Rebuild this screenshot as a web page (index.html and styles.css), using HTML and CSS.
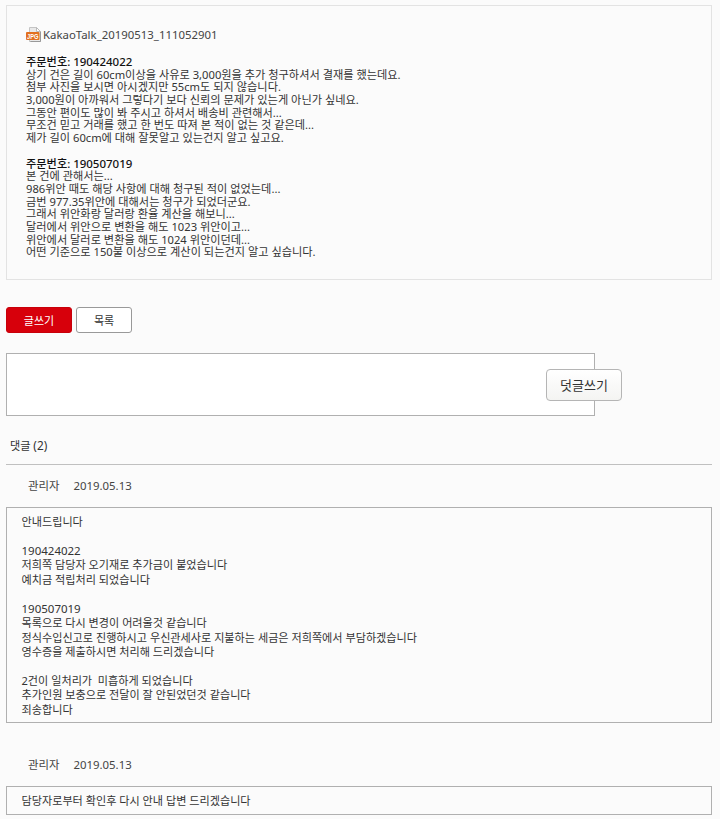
FILE: index.html
```html
<!DOCTYPE html>
<html lang="ko">
<head>
  <meta charset="UTF-8" />
  <title>문의 게시판</title>
  <link rel="stylesheet" href="styles.css">
</head>
<body>
  <div class="view">
    <div class="file">
      <svg class="file-icon" width="16" height="16" viewBox="0 0 16 16">
        <path d="M3.5 .5h7l4 4v10h-11z" fill="#e9e9e9" stroke="#c4c4c4"/>
        <path d="M14.5 4.5v10h-10" fill="none" stroke="#999"/>
        <path d="M10.5 .5v4h4z" fill="#fff" stroke="#bbb"/>
        <rect x="0" y="5" width="13.5" height="8" rx="1" fill="#e2701f"/>
        <text class="file-ext" x="1" y="11.7" textLength="11.5" lengthAdjust="spacingAndGlyphs">JPG</text>
      </svg>
      <a class="file-name">KakaoTalk_20190513_111052901</a>
    </div>
    <div class="content">
      <p class="order">주문번호: <span>190424022</span></p>
      <p>상기 건은 길이 60cm이상을 사유로 3,000원을 추가 청구하셔서 결재를 했는데요.</p>
      <p>첨부 사진을 보시면 아시겠지만 55cm도 되지 않습니다.</p>
      <p>3,000원이 아까워서 그렇다기 보다 신뢰의 문제가 있는게 아닌가 싶네요.</p>
      <p>그동안 편이도 많이 봐 주시고 하셔서 배송비 관련해서...</p>
      <p>무조건 믿고 거래를 했고 한 번도 따져 본 적이 없는 것 같은데...</p>
      <p>제가 길이 60cm에 대해 잘못알고 있는건지 알고 싶고요.</p>
      <br>
      <p class="order">주문번호: <span>190507019</span></p>
      <p>본 건에 관해서는...</p>
      <p>986위안 때도 해당 사항에 대해 청구된 적이 없었는데...</p>
      <p>금번 977.35위안에 대해서는 청구가 되었더군요.</p>
      <p>그래서 위안화랑 달러랑 환율 계산을 해보니...</p>
      <p>달러에서 위안으로 변환을 해도 1023 위안이고...</p>
      <p>위안에서 달러로 변환을 해도 1024 위안이던데...</p>
      <p>어떤 기준으로 150불 이상으로 계산이 되는건지 알고 싶습니다.</p>
    </div>
  </div>

  <div class="buttons">
    <button class="btn btn-write">글쓰기</button>
    <button class="btn btn-list">목록</button>
  </div>

  <div class="reply-form">
    <textarea class="reply-text"></textarea>
    <button class="btn-reply">덧글쓰기</button>
  </div>

  <div class="reply-count">댓글 <span>(2)</span></div>

  <div class="reply">
    <div class="reply-info"><span>관리자</span><span>2019.05.13</span></div>
    <div class="reply-body">안내드립니다

<span class="num">190424022</span>
저희쪽 담당자 오기재로 추가금이 붙었습니다
예치금 적립처리 되었습니다

<span class="num">190507019</span>
목록으로 다시 변경이 어려울것 같습니다
정식수입신고로 진행하시고 우신관세사로 지불하는 세금은 저희쪽에서 부담하겠습니다
영수증을 제출하시면 처리해 드리겠습니다

2건이 일처리가  미흡하게 되었습니다
추가인원 보충으로 전달이 잘 안된었던것 같습니다
죄송합니다</div>
  </div>

  <div class="reply">
    <div class="reply-info"><span>관리자</span><span>2019.05.13</span></div>
    <div class="reply-body">담당자로부터 확인후 다시 안내 답변 드리겠습니다</div>
  </div>
</body>
</html>
```
FILE: styles.css
```css
* {
  box-sizing: border-box;
}
body {
  margin: 0;
  padding: 5px 8px 0 6px;
  background: #fbfbfb;
  color: #333;
  font-family: "Noto Sans", "Noto Sans CJK KR", sans-serif;
  font-size: 11.12px;
  overflow: hidden;
}
p {
  margin: 0;
}
.view {
  height: 275px;
  padding: 20px 19px 0;
  border: 1px solid #e3e3e3;
}
.file {
  display: flex;
  align-items: center;
  height: 18px;
  gap: 1px;
}
.file-ext {
  font-family: "Liberation Sans", sans-serif;
  font-size: 7.5px;
  font-weight: bold;
  fill: #fff;
}
.file-name {
  font-size: 11.4px;
  line-height: 18px;
  color: #444;
}
.content {
  margin-top: 12px;
  font-size: 11.19px;
  line-height: 12.68px;
}
.order {
  color: #111;
  font-weight: 500;
}
.order span,
.num {
  font-size: 11.5px;
}
.buttons {
  display: flex;
  gap: 4px;
  margin-top: 27px;
}
.btn {
  height: 26px;
  padding: 0 0 1px;
  border-radius: 3px;
  font-family: inherit;
  font-size: 11px;
}
.btn-write {
  width: 66px;
  border: 1px solid #c8000a;
  background: #d7000b;
  color: #fff;
}
.btn-list {
  width: 56px;
  border: 1px solid #999;
  background: #fff;
  color: #333;
}
.reply-form {
  display: flex;
  align-items: center;
  margin-top: 20px;
}
.reply-text {
  width: 589px;
  height: 63px;
  border: 1px solid #b0b0b0;
  background: #fff;
  resize: none;
}
.btn-reply {
  width: 76px;
  height: 32px;
  margin-left: -49px;
  padding: 0 0 1px;
  border: 1px solid #b5b5b5;
  border-radius: 4px;
  background: linear-gradient(#fff, #f4f4f2);
  color: #333;
  font-family: inherit;
  font-size: 13px;
  z-index: 1;
}
.reply-count {
  height: 49px;
  padding: 21px 4px 0;
  border-bottom: 1px solid #c0c0c0;
  line-height: 16px;
}
.reply-count span {
  font-size: 11.8px;
}
.reply-info {
  display: flex;
  gap: 14px;
  height: 42px;
  padding-left: 22px;
  font-size: 11.4px;
  line-height: 41px;
  color: #444;
}
.reply-body {
  padding: 7px 14.5px 5px;
  border: 1px solid #b0b0b0;
  line-height: 14.43px;
  white-space: pre;
}
.reply + .reply {
  margin-top: 21px;
}
```
